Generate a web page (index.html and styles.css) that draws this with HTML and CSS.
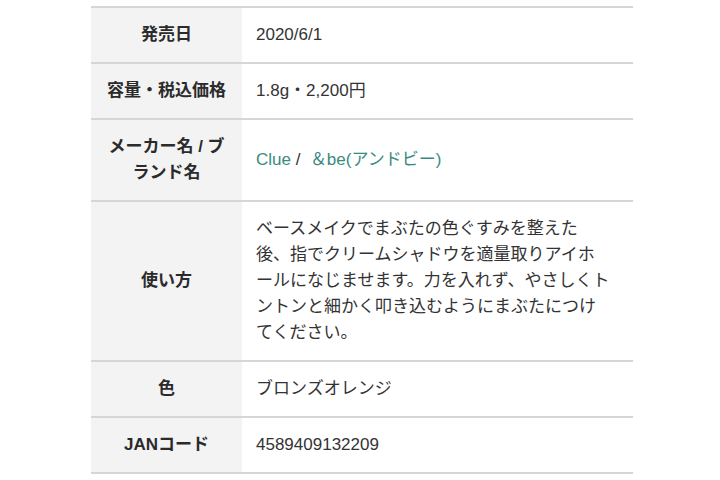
FILE: index.html
```html
<!DOCTYPE html>
<html lang="ja">
<head>
<meta charset="utf-8">
<title>商品情報</title>
<link rel="stylesheet" href="styles.css">
</head>
<body>
<div class="page">
  <table class="spec">
    <tbody>
      <tr>
        <th>発売日</th>
        <td>2020/6/1</td>
      </tr>
      <tr>
        <th>容量・税込価格</th>
        <td>1.8g・2,200円</td>
      </tr>
      <tr>
        <th>メーカー名 / ブランド名</th>
        <td><a class="link" href="#">Clue</a> / &nbsp;<a class="link" href="#">＆be(アンドビー)</a></td>
      </tr>
      <tr>
        <th>使い方</th>
        <td>ベースメイクでまぶたの色ぐすみを整えた<br>後、指でクリームシャドウを適量取りアイホ<br>ールになじませます。力を入れず、やさしくト<br>ントンと細かく叩き込むようにまぶたにつけ<br>てください。</td>
      </tr>
      <tr>
        <th>色</th>
        <td>ブロンズオレンジ</td>
      </tr>
      <tr>
        <th>JANコード</th>
        <td>4589409132209</td>
      </tr>
    </tbody>
  </table>
</div>
</body>
</html>
```

FILE: styles.css
```css
html, body {
  margin: 0;
  padding: 0;
  background: #ffffff;
}

body {
  font-family: "Liberation Sans", "Noto Sans CJK JP", sans-serif;
  font-size: 17px;
  color: #333333;
}

.page {
  padding: 6px 0 0 91px;
}

.spec {
  width: 542px;
  border-collapse: collapse;
  border-bottom: 2px solid #d6d6d6;
}

.spec tr {
  border-top: 2px solid #d6d6d6;
}

.spec th,
.spec td {
  line-height: 26px;
  padding: 14px 14px;
  vertical-align: middle;
}

.spec th {
  width: 123px;
  background: #f3f3f3;
  font-weight: bold;
  text-align: center;
  color: #2b2b2b;
}

.spec td {
  text-align: left;
  white-space: nowrap;
}

.link {
  color: #3a8a7f;
  text-decoration: none;
}
```
